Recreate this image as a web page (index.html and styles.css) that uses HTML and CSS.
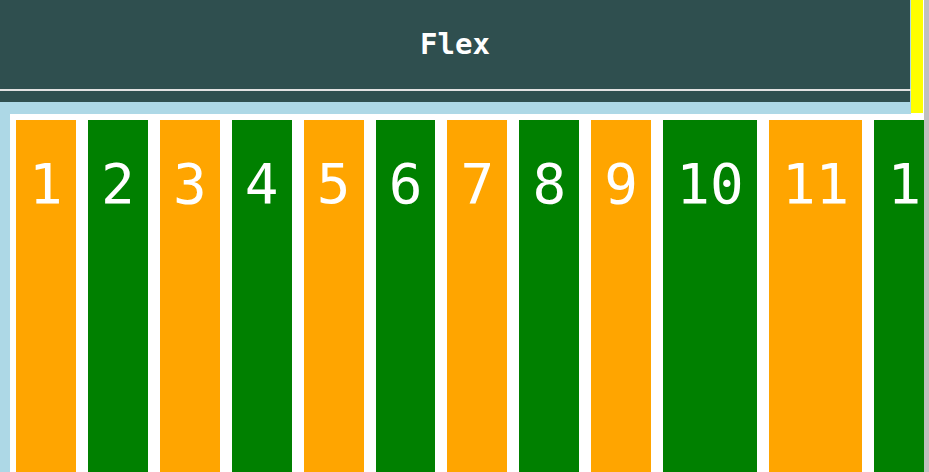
FILE: index.html
```html
<!DOCTYPE html>
<html>
<head>
<meta charset="utf-8">
<link rel="stylesheet" href="styles.css">
</head>
<body>
<div class="page">
  <div class="main">
    <div class="top">
      <div class="head-col">
        <header class="header">
          <h1 class="title">Flex</h1>
          <div class="rule"></div>
        </header>
      </div>
      <div class="marker"></div>
    </div>
    <div class="content">
      <div class="item orange">1</div>
      <div class="item green">2</div>
      <div class="item orange">3</div>
      <div class="item green">4</div>
      <div class="item orange">5</div>
      <div class="item green">6</div>
      <div class="item orange">7</div>
      <div class="item green">8</div>
      <div class="item orange">9</div>
      <div class="item green">10</div>
      <div class="item orange">11</div>
      <div class="item green">12</div>
    </div>
  </div>
  <div class="rail"></div>
</div>
</body>
</html>
```

FILE: styles.css
```css
html, body {
  margin: 0;
  padding: 0;
  background: #ffffff;
}
.page {
  display: flex;
  height: 472px;
  overflow: hidden;
}
.main {
  width: 924px;
  display: flex;
  flex-direction: column;
  background: #add8e6;
}
.rail {
  width: 5px;
  background: #c0c0c0;
}
.top {
  display: flex;
  height: 114px;
  background: #ffffff;
}
.head-col {
  width: 911px;
  height: 114px;
  background: #add8e6;
}
.header {
  width: 910px;
  height: 102px;
  background: #2f4f4f;
  display: flex;
  flex-direction: column;
}
.title {
  margin: 0;
  height: 89px;
  box-sizing: border-box;
  padding-top: 27px;
  font-family: "DejaVu Sans Mono", monospace;
  font-weight: bold;
  font-size: 29px;
  line-height: normal;
  color: #ffffff;
  text-align: center;
}
.rule {
  width: 911px;
  height: 2px;
  background: #e2e2e2;
}
.marker {
  width: 12px;
  height: 113px;
  background: #ffff00;
}
.content {
  flex: 1;
  margin-left: 10px;
  background: #ffffff;
  display: flex;
  gap: 12px;
  padding: 6px 0 0 6px;
  overflow: hidden;
}
.item {
  flex: none;
  padding: 31px 13.1px 0;
  font-family: "DejaVu Sans Mono", monospace;
  font-size: 56px;
  line-height: normal;
  color: #ffffff;
  text-align: center;
}
.orange { background: #ffa500; }
.green { background: #008000; }
```
